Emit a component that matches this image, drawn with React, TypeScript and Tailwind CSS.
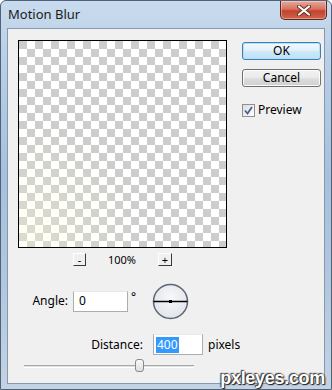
export default function App() {
  const font = { fontFamily: '"Noto Sans", "Open Sans", sans-serif' }

  return (
    <div className="w-[332px] h-[390px] bg-white" style={font}>
      <div className="relative w-[332px] h-[390px] flex flex-col rounded-t-[6px] border border-[#4f6279] bg-[linear-gradient(180deg,#c9dbee_0%,#b9cfe6_15%,#a7c0dc_45%,#b3c8df_75%,#c4d3e3_100%)] px-[6px] pb-[5px]">
        {/* title bar */}
        <div className="h-[27px] flex items-start">
          <div className="pl-[1px] pt-[5px] text-[13px] leading-[17px] text-[#1b1b1b]">Motion Blur</div>
          <div className="ml-auto mr-[-2px] w-[47px] h-[19px] rounded-b-[5px] border border-t-0 border-[#5d2620] bg-[linear-gradient(180deg,#e9a99c_0%,#d6735f_45%,#c2432f_55%,#d2624c_100%)] flex items-center justify-center shadow-[inset_0_0_0_1px_rgba(255,255,255,0.35)]">
            <svg width="14" height="11" viewBox="0 0 14 11">
              <path d="M2 1.5 L12 9.5 M12 1.5 L2 9.5" stroke="#6b2a22" strokeWidth="4" strokeLinecap="round" />
              <path d="M2 1.5 L12 9.5 M12 1.5 L2 9.5" stroke="#ffffff" strokeWidth="2.2" strokeLinecap="round" />
            </svg>
          </div>
        </div>

        {/* client area */}
        <div className="flex-1 border border-[#8598ad] bg-[#f0f0f0] pl-[10px] pt-[11px] text-[12px] leading-[16px] text-black">
          <div className="flex">
            <div className="w-[209px]">
              <div className="relative h-[208px] border border-black bg-[conic-gradient(#fff_0_25%,#cdcdcd_0_50%,#fff_0_75%,#cdcdcd_0)] bg-[length:16px_16px]">
                <div className="absolute inset-0 bg-[radial-gradient(ellipse_at_5%_95%,rgba(255,255,215,0.3)_0%,rgba(255,255,230,0)_40%)]" />
              </div>
              <div className="mt-[5px] h-[13px] flex items-center justify-center gap-[22px]">
                <div className="w-[13px] h-[13px] border-t border-l border-t-white border-l-white border-r border-b border-r-[#3a3a3a] border-b-[#3a3a3a] flex items-center justify-center text-[11px] leading-none">-</div>
                <div className="text-[11px] leading-[13px]">100%</div>
                <div className="w-[14px] h-[13px] border-t border-l border-t-white border-l-white border-r border-b border-r-[#3a3a3a] border-b-[#3a3a3a] flex items-center justify-center text-[11px] leading-none">+</div>
              </div>
            </div>

            <div className="ml-[15px] w-[79px] pt-[2px]">
              <div className="h-[18px] rounded-[3px] border border-[#3c7fb1] bg-[linear-gradient(180deg,#f2f9fd_0%,#e3f1fb_45%,#cde8f8_55%,#bfe0f4_100%)] shadow-[inset_0_0_0_1px_#b0e1f8] flex items-center justify-center">OK</div>
              <div className="mt-[9px] h-[18px] rounded-[3px] border border-[#707070] bg-[linear-gradient(180deg,#f2f2f2_0%,#ebebeb_45%,#dddddd_55%,#cfcfcf_100%)] shadow-[inset_0_0_0_1px_#fcfcfc] flex items-center justify-center">Cancel</div>
              <div className="mt-[15px] flex items-center">
                <div className="w-[13px] h-[13px] border border-[#8f8f8f] bg-[linear-gradient(135deg,#dcdcdc,#ffffff)] flex items-center justify-center">
                  <svg width="9" height="9" viewBox="0 0 9 9">
                    <path d="M1 4.5 L3.5 7.5 L8 1" stroke="#4a5f97" strokeWidth="1.8" fill="none" />
                  </svg>
                </div>
                <span className="ml-[3px]">Preview</span>
              </div>
            </div>
          </div>

          {/* angle */}
          <div className="mt-[17px] h-[36px] flex items-center">
            <div className="w-[50px] text-right">Angle:</div>
            <div className="ml-[5px] w-[55px] h-[21px] border border-[#abadb3] border-t-[#e3e9ef] bg-white pl-[5px] flex items-center">0</div>
            <div className="w-[24px] self-start pt-[6px] pl-[3px]">°</div>
            <svg width="37" height="37" viewBox="0 0 37 37">
              <defs>
                <radialGradient id="dial" cx="50%" cy="40%" r="60%">
                  <stop offset="0%" stopColor="#f7f8fa" />
                  <stop offset="100%" stopColor="#e1e4ea" />
                </radialGradient>
              </defs>
              <circle cx="18.5" cy="18.5" r="17" fill="url(#dial)" stroke="#5d6676" strokeWidth="1.5" />
              <line x1="1.5" y1="18.5" x2="35.5" y2="18.5" stroke="#000" strokeWidth="1.3" />
              <rect x="17" y="17" width="3" height="3" fill="#000" />
            </svg>
          </div>

          {/* distance */}
          <div className="mt-[15px] h-[21px] flex items-center">
            <div className="w-[125px] text-right">Distance:</div>
            <div className="ml-[10px] w-[50px] h-[21px] border border-[#abadb3] border-t-[#e3e9ef] bg-white pl-[2px] flex items-center">
              <span className="bg-[#3399ff] text-white px-[1px]">400</span>
            </div>
            <div className="ml-[5px]">pixels</div>
          </div>

          {/* slider */}
          <div className="relative mt-[4px] ml-[6px] w-[170px] h-[13px]">
            <div className="absolute left-0 right-0 top-[6px] h-[3px] border-t border-[#a9a9a9] border-b border-b-white bg-[#e2e2e2]" />
            <div className="absolute left-[111px] top-0 w-[9px] h-[13px] rounded-[3px] border border-[#8a8a8a] bg-[linear-gradient(180deg,#fafafa,#dedede)]" />
          </div>
        </div>

        <div className="absolute right-[6px] bottom-[1px] text-[18px] leading-[20px] font-bold tracking-[-0.3px] text-white [text-shadow:0_0_2px_#2a2a2a,1px_1px_1px_#1e1e1e,-1px_-1px_1px_#444]" style={{ fontFamily: '"Liberation Sans", Arial, sans-serif' }}>
          pxleyes.com
        </div>
      </div>
    </div>
  )
}
